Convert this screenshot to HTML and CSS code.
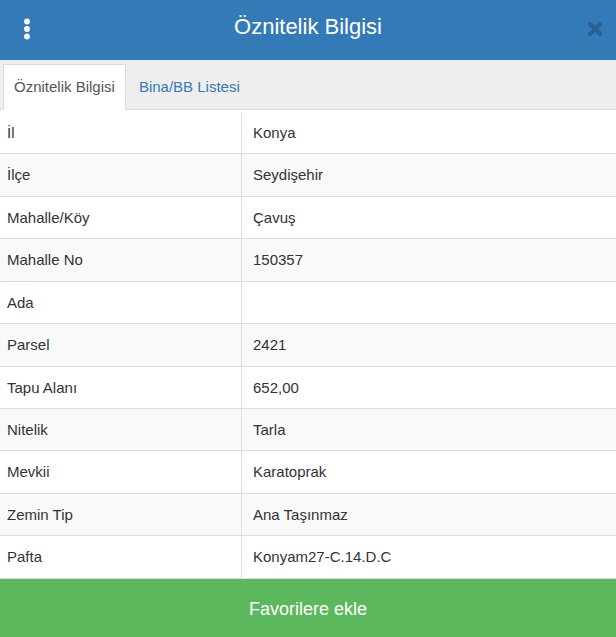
FILE: index.html
```html
<!DOCTYPE html>
<html lang="tr">
<head>
  <meta charset="UTF-8">
  <meta name="viewport" content="width=device-width, initial-scale=1.0">
  <title>Öznitelik Bilgisi</title>
  <link rel="stylesheet" href="styles.css">
</head>
<body>
  <div class="panel">
    <!-- Header -->
    <div class="panel-header">
      <button class="menu-btn" type="button">
        <svg width="8" height="22" viewBox="0 0 8 22">
          <circle cx="4" cy="3.5" r="2.9" fill="#fff"/>
          <circle cx="4" cy="11" r="2.9" fill="#fff"/>
          <circle cx="4" cy="18.5" r="2.9" fill="#fff"/>
        </svg>
      </button>
      <h1>Öznitelik Bilgisi</h1>
      <button class="close" type="button">
        <svg width="16" height="16" viewBox="0 0 16 16">
          <path d="M3 3 L13 13 M13 3 L3 13" stroke="#000" stroke-width="4.2" stroke-linecap="round"/>
        </svg>
      </button>
    </div>

    <!-- Tabs -->
    <ul class="nav-tabs">
      <li class="active"><a href="#">Öznitelik Bilgisi</a></li>
      <li><a href="#">Bina/BB Listesi</a></li>
    </ul>

    <!-- Attribute table -->
    <table class="attr-table">
      <tbody id="attrRows"></tbody>
    </table>

    <button class="btn-fav" type="button">Favorilere ekle</button>
  </div>

  <script>
    const attributes = [
      ["İl", "Konya"],
      ["İlçe", "Seydişehir"],
      ["Mahalle/Köy", "Çavuş"],
      ["Mahalle No", "150357"],
      ["Ada", ""],
      ["Parsel", "2421"],
      ["Tapu Alanı", "652,00"],
      ["Nitelik", "Tarla"],
      ["Mevkii", "Karatoprak"],
      ["Zemin Tip", "Ana Taşınmaz"],
      ["Pafta", "Konyam27-C.14.D.C"]
    ];

    const tbody = document.getElementById("attrRows");
    attributes.forEach(([key, value]) => {
      const tr = document.createElement("tr");
      tr.innerHTML = `<td class="key">${key}</td><td>${value}</td>`;
      tbody.appendChild(tr);
    });
  </script>
</body>
</html>
```

FILE: styles.css
```css
body {
  margin: 0;
  padding: 0;
  background-color: #ffffff;
  color: #333333;
  font-family: "Liberation Sans", Arial, sans-serif;
  font-size: 15px;
  line-height: 1.42857;
}

.panel {
  display: flex;
  flex-direction: column;
  min-height: 100vh;
}

.panel-header {
  display: flex;
  align-items: center;
  height: 60px;
  background-color: #337ab7;
  color: #ffffff;
}

.panel-header h1 {
  flex: 1;
  margin: 0 0 6px 0;
  font-size: 22px;
  font-weight: normal;
  text-align: center;
}

.menu-btn {
  display: flex;
  align-items: center;
  justify-content: center;
  width: 54px;
  height: 60px;
  padding: 0 0 2px 0;
  background: none;
  border: none;
  cursor: pointer;
}

.close {
  display: flex;
  align-items: center;
  justify-content: center;
  width: 54px;
  height: 60px;
  padding: 0 0 3px 0;
  background: none;
  border: none;
  opacity: 0.2;
  cursor: pointer;
}

.close svg {
  margin-left: 12px;
}

.nav-tabs {
  display: flex;
  list-style: none;
  margin: 0;
  padding: 4px 0 0 3px;
  background-color: #eeeeee;
  border-bottom: 1px solid #dddddd;
}

.nav-tabs li {
  margin-right: 2px;
  margin-bottom: -1px;
}

.nav-tabs a {
  display: block;
  padding: 12px 10px 13px 10px;
  line-height: 20px;
  color: #337ab7;
  text-decoration: none;
  border: 1px solid transparent;
  border-bottom: none;
}

.nav-tabs li.active a {
  color: #555555;
  background-color: #ffffff;
  border-color: #dddddd;
}

.attr-table {
  width: 100%;
  margin-top: 2px;
  border-collapse: collapse;
  border-spacing: 0;
}

.attr-table td {
  padding: 10px 10px 10px 11px;
  border-bottom: 1px solid #dddddd;
  vertical-align: top;
}

.attr-table tr:nth-child(even) {
  background-color: #f9f9f9;
}

.attr-table td.key {
  width: 224px;
  padding-left: 7px;
  border-right: 1px solid #dddddd;
}

.btn-fav {
  display: block;
  width: 100%;
  height: 59px;
  margin-top: auto;
  padding: 3px 0 0 0;
  background-color: #5cb85c;
  color: #ffffff;
  border: none;
  font-family: "Liberation Sans", Arial, sans-serif;
  font-size: 18px;
  cursor: pointer;
}
```
